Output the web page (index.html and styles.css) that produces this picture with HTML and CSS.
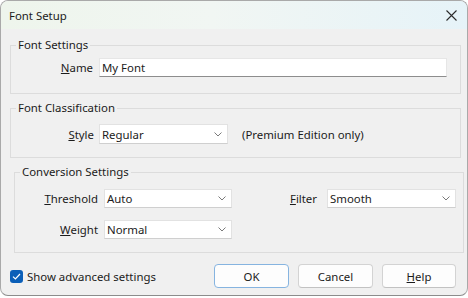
FILE: index.html
```html
<!DOCTYPE html>
<html>
<head>
<meta charset="utf-8">
<link rel="stylesheet" href="styles.css">
</head>
<body>
<div class="window">
  <div class="titlebar">
    <span class="title">Font Setup</span>
    <span class="close">
      <svg width="11" height="11" viewBox="0 0 11 11"><path d="M0.5 0.5 L10.5 10.5 M10.5 0.5 L0.5 10.5" stroke="#2b2b2b" stroke-width="1.1" fill="none"/></svg>
    </span>
  </div>
  <div class="content">
    <fieldset class="group g1">
      <legend>Font Settings</legend>
      <div class="row r-name">
        <span class="label l1"><u>N</u>ame</span>
        <div class="textbox">My Font</div>
      </div>
    </fieldset>
    <fieldset class="group g2">
      <legend>Font Classification</legend>
      <div class="row r-style">
        <span class="label l2"><u>S</u>tyle</span>
        <div class="select s-style"><span>Regular</span><svg class="chev" width="8" height="5" viewBox="0 0 8 5"><path d="M0.5 0.5 L4 4 L7.5 0.5" stroke="#7a7a7a" stroke-width="1" fill="none"/></svg></div>
        <span class="note">(Premium Edition only)</span>
      </div>
    </fieldset>
    <fieldset class="group g3">
      <legend>Conversion Settings</legend>
      <div class="grid3">
        <span class="label l3"><u>T</u>hreshold</span>
        <div class="select s3"><span>Auto</span><svg class="chev" width="8" height="5" viewBox="0 0 8 5"><path d="M0.5 0.5 L4 4 L7.5 0.5" stroke="#7a7a7a" stroke-width="1" fill="none"/></svg></div>
        <span class="label l4"><u>F</u>ilter</span>
        <div class="select s3"><span>Smooth</span><svg class="chev" width="8" height="5" viewBox="0 0 8 5"><path d="M0.5 0.5 L4 4 L7.5 0.5" stroke="#7a7a7a" stroke-width="1" fill="none"/></svg></div>
        <span class="label l3"><u>W</u>eight</span>
        <div class="select s3"><span>Normal</span><svg class="chev" width="8" height="5" viewBox="0 0 8 5"><path d="M0.5 0.5 L4 4 L7.5 0.5" stroke="#7a7a7a" stroke-width="1" fill="none"/></svg></div>
      </div>
    </fieldset>
    <div class="footer">
      <label class="check">
        <span class="box"><svg width="9" height="7" viewBox="0 0 9 7"><path d="M1 3.6 L3.4 6 L8 1" stroke="#ffffff" stroke-width="1.2" fill="none"/></svg></span>
        <span>Show advanced settings</span>
      </label>
      <div class="buttons">
        <div class="btn default">OK</div>
        <div class="btn">Cancel</div>
        <div class="btn help"><u>H</u>elp</div>
      </div>
    </div>
  </div>
</div>
</body>
</html>
```
FILE: styles.css
```css
html, body {
  margin: 0;
  padding: 0;
  background: #ffffff;
}
body {
  font-family: "Noto Sans", "Open Sans", sans-serif;
  font-size: 11.4px;
  color: #1b1b1b;
}
.window {
  width: 468px;
  height: 296px;
  box-sizing: border-box;
  border: 1px solid #a9a9a9;
  border-bottom-color: #8c8c8c;
  border-radius: 8px;
  background: #f0f0f0;
  overflow: hidden;
}
.titlebar {
  height: 28px;
  display: flex;
  align-items: center;
  justify-content: space-between;
  padding: 0 10px 0 8px;
  background: linear-gradient(90deg, #eef5ec 0%, #f1f6f3 45%, #e6f3f8 100%);
}
.title {
  line-height: 16px;
  margin-top: 1px;
}
.close {
  display: flex;
  width: 11px;
  height: 11px;
  margin-top: 1px;
}
.content {
  padding: 0;
}
.group {
  border: 1px solid #dcdcdc;
  margin: 0;
  padding: 0;
  min-width: 0;
}
.group legend {
  margin-left: 5px;
  padding: 0 2px;
  line-height: 16px;
}
.g1 {
  margin: 8px 6px 0 9px;
  padding: 5px 0 16px 0;
}
.g2 {
  margin: 6px 6px 0 9px;
  padding: 8px 0 13px 0;
}
.g3 {
  margin: 6px 3px 0 13px;
  padding: 9px 0 13px 0;
}
.row {
  display: flex;
  align-items: center;
}
.label {
  text-align: right;
  flex: none;
}
.l1 { width: 82px; margin-right: 6px; }
.l2 { width: 83px; margin-right: 5px; }
.textbox {
  width: 348px;
  height: 19px;
  box-sizing: border-box;
  background: #ffffff;
  border: 1px solid #e6e6e6;
  border-bottom-color: #8d8d8d;
  padding-left: 2px;
  line-height: 17px;
}
.select {
  height: 20px;
  box-sizing: border-box;
  background: #ffffff;
  border: 1px solid #e2e2e2;
  border-bottom-color: #cfcfcf;
  display: flex;
  align-items: center;
  justify-content: space-between;
  padding: 0 5px 0 2px;
  flex: none;
}
.s-style { width: 129px; }
.note { margin-left: 14px; }
.grid3 {
  display: grid;
  grid-template-columns: 83px 128px 83px 129px;
  column-gap: 6px;
  row-gap: 12px;
  align-items: center;
}
.grid3 .l4 { padding-right: 4px; }
.s3 { height: 19px; }
.footer {
  display: flex;
  align-items: center;
  justify-content: space-between;
  margin: 11px 11px 0 9px;
}
.check {
  display: flex;
  align-items: center;
}
.box {
  width: 13px;
  height: 13px;
  border-radius: 3px;
  background: #0b5fb8;
  display: flex;
  align-items: center;
  justify-content: center;
  margin-right: 4px;
}
.buttons {
  display: flex;
  gap: 9px;
}
.btn {
  width: 75px;
  height: 24px;
  box-sizing: border-box;
  border: 1px solid #d3d3d3;
  border-bottom-color: #c2c2c2;
  border-radius: 4px;
  background: #fdfdfd;
  display: flex;
  align-items: center;
  justify-content: center;
}
.btn.default {
  border-color: #86b4e0;
}
.btn.help { width: 74px; }
```
